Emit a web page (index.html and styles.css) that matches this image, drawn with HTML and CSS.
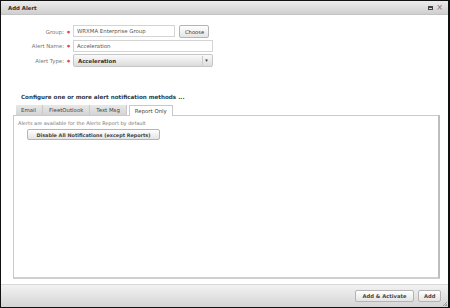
FILE: index.html
```html
<!DOCTYPE html>
<html lang="en">
<head>
  <meta charset="UTF-8" />
  <title>Add Alert</title>
  <link rel="stylesheet" href="styles.css">
</head>
<body>
  <div class="window">
    <div class="titlebar">
      <span class="title">Add Alert</span>
      <span class="win-icons">
        <span class="max-icon"></span>
        <span class="close-icon">&#215;</span>
      </span>
    </div>

    <div class="content">
      <div class="form">
        <label class="label">Group:</label>
        <span class="req">&#9679;</span>
        <div class="field-row">
          <input class="input short" type="text" value="WRXMA Enterprise Group" />
          <button class="btn choose">Choose</button>
        </div>

        <label class="label">Alert Name:</label>
        <span class="req">&#9679;</span>
        <input class="input" type="text" value="Acceleration" />

        <label class="label">Alert Type:</label>
        <span class="req">&#9679;</span>
        <div class="select">
          <span class="select-value">Acceleration</span>
          <span class="select-arrow">&#9662;</span>
        </div>
      </div>

      <h3 class="section-title">Configure one or more alert notification methods ...</h3>

      <div class="tabs">
        <div class="tab">Email</div>
        <div class="tab">FleetOutlook</div>
        <div class="tab">Text Msg</div>
        <div class="tab active">Report Only</div>
      </div>
      <div class="tab-panel">
        <p class="note">Alerts are available for the Alerts Report by default</p>
        <button class="btn disable">Disable All Notifications (except Reports)</button>
      </div>
    </div>

    <div class="footer">
      <button class="btn">Add &amp; Activate</button>
      <button class="btn">Add</button>
      <span class="grip"></span>
    </div>
  </div>
</body>
</html>
```

FILE: styles.css
```css
* {
  box-sizing: border-box;
  margin: 0;
  padding: 0;
}

html, body {
  width: 450px;
  height: 308px;
  overflow: hidden;
  background: #fff;
  font-family: 'DejaVu Sans', Verdana, sans-serif;
  font-size: 5.4px;
  color: #333;
}

.window {
  width: 450px;
  height: 308px;
  border: 1px solid #111;
  border-right-width: 2px;
  display: flex;
  flex-direction: column;
  background: #fff;
}

.titlebar {
  height: 14px;
  flex: none;
  display: flex;
  align-items: center;
  justify-content: space-between;
  padding: 0 5px 0 7px;
  background: linear-gradient(#ececec, #cfcfcf);
  border-bottom: 1px solid #c4c4c4;
}

.title {
  font-weight: bold;
  color: #333;
}

.win-icons {
  display: flex;
  align-items: center;
  gap: 3px;
}

.max-icon {
  width: 5px;
  height: 4px;
  border: 1px solid #444;
  border-top-width: 2px;
}

.close-icon {
  font-size: 8px;
  line-height: 8px;
  color: #777;
}

.content {
  flex: 1;
  padding: 10px 10px 5px 11px;
  display: flex;
  flex-direction: column;
}

.form {
  display: grid;
  grid-template-columns: 52px 9px 140px;
  row-gap: 2px;
  align-items: center;
}

.label {
  text-align: right;
  color: #777;
}

.req {
  color: #e04050;
  font-size: 3.5px;
  text-align: center;
}

.field-row {
  display: flex;
  gap: 4px;
}

.input {
  height: 12px;
  width: 140px;
  border: 1px solid #d4d4d4;
  padding: 0 3px;
  font-family: inherit;
  font-size: 5.4px;
  color: #555;
  outline: none;
}

.input.short {
  width: 102px;
}

.btn {
  height: 12px;
  padding: 0 5px;
  border: 1px solid #b4b4b4;
  border-radius: 2px;
  background: linear-gradient(#ffffff, #e4e4e4);
  font-family: inherit;
  font-size: 5.2px;
  font-weight: bold;
  color: #444;
  white-space: nowrap;
}

.choose {
  width: 30px;
  height: 13px;
  font-weight: normal;
  color: #333;
}

.select {
  height: 13px;
  width: 140px;
  border: 1px solid #c6c6c6;
  border-radius: 2px;
  background: linear-gradient(#fafafa, #dcdcdc);
  display: flex;
  align-items: center;
  justify-content: space-between;
  padding: 0 2px 0 4px;
}

.select-value {
  font-weight: bold;
  color: #333;
}

.select-arrow {
  width: 8px;
  height: 9px;
  border-left: 1px solid #ccc;
  font-size: 5px;
  line-height: 9px;
  text-align: center;
  color: #333;
}

.section-title {
  margin: 27px 0 0 9px;
  font-size: 5.6px;
  font-weight: bold;
  color: #2e3a44;
}

.tabs {
  display: flex;
  margin: 4px 0 0 4px;
  height: 11px;
  align-items: flex-end;
}

.tab {
  height: 10px;
  padding: 0 6px;
  display: flex;
  align-items: center;
  background: linear-gradient(#e8e8e8, #d4d4d4);
  border-right: 1px solid #c9c9c9;
  color: #444;
}

.tab:first-child {
  padding-left: 5px;
}

.tab.active {
  height: 11px;
  margin-left: 2px;
  padding: 0 5px;
  background: #fff;
  border: 1px solid #c8c8c8;
  border-bottom: none;
  margin-bottom: -1px;
  position: relative;
}

.tab-panel {
  flex: 1;
  margin-left: 1px;
  width: 427px;
  border: 1px solid #cacaca;
  border-right: 2px solid #bdbdbd;
  border-bottom: 2px solid #cfcfcf;
  padding: 4px 4px;
}

.note {
  color: #777;
  font-size: 5px;
}

.disable {
  margin: 3px 0 0 9px;
  width: 133px;
  height: 11px;
  padding: 0;
  font-size: 4.9px;
}

.footer {
  height: 23px;
  flex: none;
  display: flex;
  align-items: center;
  justify-content: flex-end;
  gap: 4px;
  padding: 0 7px 0 0;
  background: linear-gradient(#f2f2f2, #d4d4d4);
  border-top: 1px solid #d8d8d8;
  position: relative;
}

.footer .btn {
  height: 12px;
}

.footer .btn:first-child {
  width: 59px;
}

.footer .btn:nth-child(2) {
  width: 23px;
}

.grip {
  position: absolute;
  right: 1px;
  bottom: 1px;
  width: 6px;
  height: 6px;
  background: repeating-linear-gradient(135deg, transparent 0 1px, #999 1px 2px);
  clip-path: polygon(100% 0, 100% 100%, 0 100%);
}
```
